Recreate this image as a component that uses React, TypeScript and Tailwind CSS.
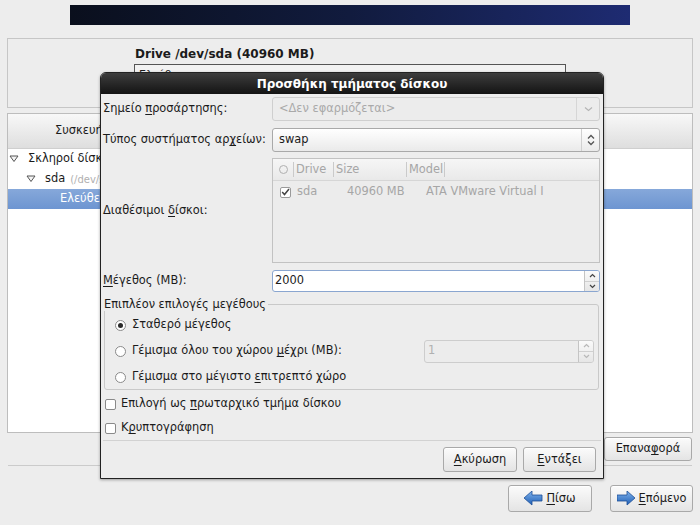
import React from "react";

function U({ children }: { children: React.ReactNode }) {
  return <span className="underline underline-offset-2">{children}</span>;
}

function Btn({
  children,
  className = "",
}: {
  children: React.ReactNode;
  className?: string;
}) {
  return (
    <div
      className={
        "flex items-center justify-center rounded-[3px] border border-[#a9a9a9] bg-linear-to-b from-[#fbfbfb] to-[#e4e4e4] shadow-[inset_0_1px_0_#ffffff] " +
        className
      }
    >
      {children}
    </div>
  );
}

function Expander() {
  return (
    <svg width="10" height="8" viewBox="0 0 10 8">
      <polygon points="1,1 9,1 5,6.5" fill="#f4f4f4" stroke="#555" strokeWidth="1" />
    </svg>
  );
}

function Radio({ on = false }: { on?: boolean }) {
  return (
    <span className="flex h-[11px] w-[11px] shrink-0 items-center justify-center rounded-full border border-[#8a8a8a] bg-white">
      {on && <span className="h-[5px] w-[5px] rounded-full bg-[#2a2a2a]" />}
    </span>
  );
}

function Check() {
  return <span className="h-[11px] w-[11px] shrink-0 rounded-[2px] border border-[#8a8a8a] bg-white" />;
}

function UpDown({ color = "#555" }: { color?: string }) {
  return (
    <svg width="8" height="12" viewBox="0 0 8 12" fill="none" stroke={color} strokeWidth="1.3">
      <path d="M1 4.5L4 1.5L7 4.5" />
      <path d="M1 7.5L4 10.5L7 7.5" />
    </svg>
  );
}

function Spin({ disabled = false }: { disabled?: boolean }) {
  const c = disabled ? "#b8b8b8" : "#444";
  return (
    <div className="flex w-[15px] flex-col border-l border-[#c4c4c4] bg-linear-to-b from-[#fafafa] to-[#e6e6e6]">
      <div className="flex flex-1 items-center justify-center border-b border-[#d0d0d0]">
        <svg width="7" height="5" viewBox="0 0 7 5" fill="none" stroke={c} strokeWidth="1.2">
          <path d="M1 4L3.5 1.5L6 4" />
        </svg>
      </div>
      <div className="flex flex-1 items-center justify-center">
        <svg width="7" height="5" viewBox="0 0 7 5" fill="none" stroke={c} strokeWidth="1.2">
          <path d="M1 1L3.5 3.5L6 1" />
        </svg>
      </div>
    </div>
  );
}

function Arrow({ dir }: { dir: "left" | "right" }) {
  const pts =
    dir === "left"
      ? "0,7 8,0 8,4 18,4 18,10 8,10 8,14"
      : "18,7 10,0 10,4 0,4 0,10 10,10 10,14";
  return (
    <svg width="19" height="15" viewBox="0 0 19 15">
      <defs>
        <linearGradient id={"g" + dir} x1="0" y1="0" x2="0" y2="1">
          <stop offset="0" stopColor="#7fb2ec" />
          <stop offset="1" stopColor="#1f5fb5" />
        </linearGradient>
      </defs>
      <polygon points={pts} fill={"url(#g" + dir + ")"} stroke="#1d4f98" strokeWidth="0.8" />
    </svg>
  );
}

function Dialog() {
  return (
    <div className="absolute left-[100px] top-[72px] flex h-[407px] w-[504px] flex-col overflow-hidden rounded-t-[6px] border border-[#222] bg-[#ededed] shadow-[0_1px_3px_rgba(0,0,0,0.35)]">
      <div className="flex h-[21px] shrink-0 items-center justify-center bg-linear-to-b from-[#3e3e3e] to-[#141414] text-[12px] font-bold text-white">
        Προσθήκη τμήματος δίσκου
      </div>

      <div className="flex flex-col whitespace-nowrap pl-[2px] pr-[3px]">
        {/* mount point */}
        <div className="mt-[3px] flex h-[24px] items-center">
          <div className="w-[169px]">
            Σημείο <U>π</U>ροσάρτησης:
          </div>
          <div className="flex h-full w-[328px] items-center rounded-[3px] border border-[#cfcfcf] bg-[#ececec]">
            <span className="flex-1 pl-[6px] text-[#a9a9a9]">&lt;Δεν εφαρμόζεται&gt;</span>
            <div className="flex h-full w-[23px] items-center justify-center border-l border-[#d6d6d6]">
              <svg width="9" height="6" viewBox="0 0 9 6" fill="none" stroke="#b5b5b5" strokeWidth="1.2">
                <path d="M1 1.5L4.5 4.5L8 1.5" />
              </svg>
            </div>
          </div>
        </div>

        {/* fs type */}
        <div className="mt-[7px] flex h-[24px] items-center">
          <div className="w-[169px]">
            Τύπος συστήματος αρ<U>χ</U>είων:
          </div>
          <div className="flex h-full w-[328px] items-center rounded-[3px] border border-[#a9a9a9] bg-linear-to-b from-[#ffffff] to-[#eaeaea]">
            <span className="flex-1 pl-[6px]">swap</span>
            <div className="flex h-full w-[18px] items-center justify-center border-l border-[#d0d0d0]">
              <UpDown />
            </div>
          </div>
        </div>

        {/* disks */}
        <div className="mt-[6px] flex h-[105px] items-center">
          <div className="w-[169px]">
            Διαθέσιμοι <U>δ</U>ίσκοι:
          </div>
          <div className="flex h-full w-[328px] flex-col border border-[#c2c2c2] bg-[#ececec] text-[#a6a6a6]">
            <div className="flex h-[22px] items-center border-b border-[#d6d6d6] bg-linear-to-b from-[#f6f6f6] to-[#e9e9e9]">
              <div className="flex w-[20px] justify-center">
                <span className="h-[9px] w-[9px] rounded-full border border-[#b0b0b0]" />
              </div>
              <div className="h-[15px] border-l border-[#cacaca]" />
              <span className="w-[39px] pl-[2px]">Drive</span>
              <div className="h-[15px] border-l border-[#cacaca]" />
              <span className="w-[72px] pl-[2px]">Size</span>
              <div className="h-[15px] border-l border-[#cacaca]" />
              <span className="pl-[2px]">Model</span>
              <div className="ml-[1px] h-[15px] border-l border-[#cacaca]" />
            </div>
            <div className="mt-[1px] flex h-[20px] items-center">
              <div className="flex w-[24px] justify-center">
                <span className="flex h-[11px] w-[11px] items-center justify-center rounded-[2px] border border-[#9a9a9a] bg-white">
                  <svg width="9" height="8" viewBox="0 0 9 8" fill="none" stroke="#444" strokeWidth="1.5">
                    <path d="M1.2 4L3.5 6.5L8 1" />
                  </svg>
                </span>
              </div>
              <span className="w-[50px]">sda</span>
              <span className="w-[79px]">40960 MB</span>
              <span>ATA VMware Virtual I</span>
            </div>
          </div>
        </div>

        {/* size */}
        <div className="mt-[7px] flex h-[22px] items-center">
          <div className="w-[169px]">
            <U>Μ</U>έγεθος (MB):
          </div>
          <div className="flex h-full w-[328px] overflow-hidden rounded-[3px] border border-[#8aa6d0] bg-white">
            <span className="flex flex-1 items-center pl-[2px]">2000</span>
            <Spin />
          </div>
        </div>

        {/* more options */}
        <fieldset className="ml-[1px] mr-[1px] mt-[5px] h-[93px] rounded-[3px] border border-[#c9c9c9] px-[10px] pt-[1px]">
          <legend className="-ml-[11px] pr-[2px] leading-[14px]">Επιπλέον επιλογές μεγέθους</legend>
          <div className="flex h-[26px] items-center gap-[6px]">
            <Radio on />
            <span>Σταθερό μέγεθος</span>
          </div>
          <div className="flex h-[26px] items-center gap-[6px]">
            <Radio />
            <span className="flex-1">
              Γέμισμα όλου του χώρου <U>μ</U>έχρι (MB):
            </span>
            <div className="-mr-[6px] flex h-[23px] w-[170px] overflow-hidden rounded-[3px] border border-[#cdcdcd] bg-[#ececec] text-[#b0b0b0]">
              <span className="flex flex-1 items-center pl-[3px]">1</span>
              <Spin disabled />
            </div>
          </div>
          <div className="flex h-[26px] items-center gap-[6px]">
            <Radio />
            <span>
              Γέμισμα στο μέγιστο <U>ε</U>πιτρεπτό χώρο
            </span>
          </div>
        </fieldset>

        <div className="mt-[2px] flex h-[24px] items-center gap-[5px] pl-[2px]">
          <Check />
          <span>
            Επιλογή ως <U>π</U>ρωταρχικό τμήμα δίσκου
          </span>
        </div>
        <div className="flex h-[24px] items-center gap-[5px] pl-[2px]">
          <Check />
          <span>
            Κ<U>ρ</U>υπτογράφηση
          </span>
        </div>
      </div>

      <div className="mx-[2px] border-t border-[#d2d2d2]" />
      <div className="mt-[6px] flex justify-end gap-[6px] pr-[7px]">
        <Btn className="h-[25px] w-[74px]">
          <span>
            <U>Α</U>κύρωση
          </span>
        </Btn>
        <Btn className="h-[25px] w-[73px]">
          <span>
            <U>Ε</U>ντάξει
          </span>
        </Btn>
      </div>
    </div>
  );
}

export default function App() {
  return (
    <div className="relative h-[525px] w-[700px] overflow-hidden bg-[#ededed] font-['DejaVu_Sans',sans-serif] text-[11.4px] text-[#1b1b1b]">
      {/* banner */}
      <div className="mx-[70px] mt-[5px] h-[20px] bg-linear-to-r from-[#0a0f1d] via-[#111b3e] to-[#1e2b72]" />

      {/* drive panel */}
      <div className="mx-[7px] mt-[13px] h-[70px] border border-[#c6c6c6] bg-[#ededed]">
        <div className="ml-[127px] mt-[6px] text-[12px] font-bold">Drive /dev/sda (40960 MB)</div>
        <div className="ml-[126px] mt-[1px] h-[34px] w-[432px] border border-[#555] bg-[#f2f2f2] pl-[4px] pt-[2px] text-[11px]">
          Ελεύθερο
        </div>
      </div>

      {/* device tree */}
      <div className="mx-[7px] mt-[5px] flex h-[320px] flex-col whitespace-nowrap border border-[#bdbdbd] bg-white">
        <div className="flex h-[35px] shrink-0 items-center border-b border-[#cfcfcf] bg-linear-to-b from-[#f8f8f8] to-[#dedede] pl-[47px]">
          Συσκευή
        </div>
        <div className="flex h-[20px] items-center">
          <div className="flex w-[12px] justify-end pr-[1px]">
            <Expander />
          </div>
          <span className="ml-[8px]">Σκληροί δίσκοι</span>
        </div>
        <div className="flex h-[20px] items-center">
          <div className="flex w-[29px] justify-end pr-[1px]">
            <Expander />
          </div>
          <span className="ml-[8px]">sda</span>
          <span className="ml-[5px] text-[10px] text-[#b0b0b0]">(/dev/sda)</span>
        </div>
        <div className="flex h-[20px] items-center bg-linear-to-b from-[#86a8da] to-[#6d95d1] pl-[52px] text-white">
          Ελεύθερο
        </div>
      </div>

      <div className="mt-[4px] flex justify-end pr-[8px]">
        <Btn className="h-[24px] w-[88px]">
          <span>
            Επανα<U>φ</U>ορά
          </span>
        </Btn>
      </div>

      <div className="mx-[8px] mt-[4px] border-t border-[#cbcbcb]" />

      <div className="mt-[19px] flex justify-end gap-[18px] pr-[7px]">
        <Btn className="h-[27px] w-[84px] gap-[3px]">
          <Arrow dir="left" />
          <span>
            <U>Π</U>ίσω
          </span>
        </Btn>
        <Btn className="h-[27px] w-[83px] gap-[3px]">
          <Arrow dir="right" />
          <span>
            <U>Ε</U>πόμενο
          </span>
        </Btn>
      </div>

      <Dialog />
    </div>
  );
}
